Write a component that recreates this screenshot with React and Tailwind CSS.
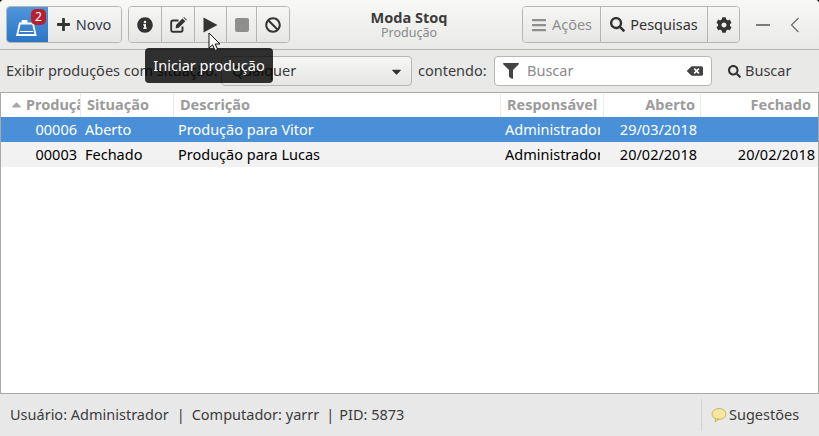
import { FaInfoCircle, FaBan, FaBars, FaSearch, FaCog, FaFilter, FaBackspace, FaPlus, FaCaretDown } from "react-icons/fa";

const btn = "flex h-full items-center justify-center border-r border-[#b6b6b3] last:border-r-0 bg-gradient-to-b from-[#f6f6f5] to-[#e6e6e4]";

function Header({ className, children }) {
  return <div className={`flex h-[24px] items-center border-r border-[#ececec] text-[14.5px] font-bold text-[#9b9b9b] ${className}`}>{children}</div>;
}

function Row({ bg, color, cells }) {
  return (
    <div className={`grid h-[25px] grid-cols-[80px_93px_327px_103px_97px_118px] items-center text-[14.5px] ${bg} ${color}`}>
      <div className="pr-[4px] text-right">{cells[0]}</div>
      <div className="pl-[4px]">{cells[1]}</div>
      <div className="pl-[4px]">{cells[2]}</div>
      <div className="pl-[4px]">
        <div className="w-[95px] overflow-hidden whitespace-nowrap">{cells[3]}</div>
      </div>
      <div className="pr-[4px] text-right">{cells[4]}</div>
      <div className="pr-[4px] text-right">{cells[5]}</div>
    </div>
  );
}

export default function App() {
  return (
    <div className="relative h-[436px] w-[819px] overflow-hidden bg-black font-['Noto_Sans','Open_Sans',sans-serif] text-[14.5px] text-[#3c3c3c]">
      <div className="flex h-full flex-col overflow-hidden rounded-t-[4px] bg-[#e8e8e7]">
        {/* top toolbar */}
        <div className="flex h-[50px] shrink-0 items-center border-b border-[#b4b4b2] bg-gradient-to-b from-[#f8f8f7] to-[#e9e9e7] pl-[6px]">
          <div className="flex h-[37px] w-[116px] overflow-hidden rounded-[4px] border border-[#b6b6b3]">
            <div className="relative flex w-[41px] shrink-0 items-center justify-center bg-gradient-to-b from-[#4f95dc] to-[#2a76c6]">
              <svg width="21" height="18" viewBox="0 0 21 18" className="mr-[2px] mt-[6px]" fill="none" stroke="#fff" strokeWidth="1.8">
                <path d="M1.2 16 3.8 4.5H17l2.6 11.5z" />
                <path d="M4 12.5h13" strokeWidth="1.2" />
                <path d="M6 1.5h5v3H6z" fill="#fff" strokeWidth="1" />
              </svg>
              <span className="absolute right-[2px] top-[2px] flex h-[16px] w-[15px] items-center justify-center rounded-[5px] bg-[#b8202f] text-[12px] text-white">2</span>
            </div>
            <div className="flex flex-1 items-center justify-center gap-[5px] bg-gradient-to-b from-[#f6f6f5] to-[#e6e6e4] pr-[2px] text-[#2f3b4c]">
              <FaPlus className="text-[15px] text-[#333]" />
              <span>Novo</span>
            </div>
          </div>

          <div className="ml-[6px] grid h-[37px] w-[162px] grid-cols-[33px_33px_32px_30px_1fr] overflow-hidden rounded-[4px] border border-[#b6b6b3] text-[#333]">
            <div className={btn}><FaInfoCircle className="text-[16px]" /></div>
            <div className={btn}>
              <svg width="17" height="16" viewBox="0 0 17 16" fill="none" className="ml-[1px]">
                <path d="M12.5 9.5V13a1.8 1.8 0 0 1-1.8 1.8H3A1.8 1.8 0 0 1 1.2 13V5.3A1.8 1.8 0 0 1 3 3.5h5.5" stroke="#333" strokeWidth="1.9" />
                <path d="M6 8 12.5 1.5l2.8 2.8L8.8 10.8 5.6 11.4z" fill="#333" />
                <path d="M13.4.6 14 0l2.8 2.8-.7.7z" fill="#333" />
              </svg>
            </div>
            <div className={btn}>
              <svg width="15" height="16" viewBox="0 0 15 16" fill="#333"><path d="M0.5 0.5 14.5 8 0.5 15.5z" /></svg>
            </div>
            <div className={btn}><div className="h-[14px] w-[14px] rounded-[2px] bg-[#8f8f8f]" /></div>
            <div className={btn}><FaBan className="text-[16px]" /></div>
          </div>

          <div className="flex w-[232px] flex-col items-center pl-[6px] pt-[1px] leading-[15px]">
            <span className="text-[14.5px] font-bold text-[#3c3c3c]">Moda Stoq</span>
            <span className="text-[12.5px] text-[#8a8a8a]">Produção</span>
          </div>

          <div className="flex h-[37px] w-[218px] overflow-hidden rounded-[4px] border border-[#b6b6b3]">
            <div className={`${btn} w-[78px] gap-[5px] text-[#8f8f8f]`}><FaBars className="text-[16px]" /><span>Ações</span></div>
            <div className={`${btn} w-[107px] gap-[5px] text-[#333]`}><FaSearch className="text-[15px]" /><span>Pesquisas</span></div>
            <div className={`${btn} flex-1 text-[#333]`}><FaCog className="text-[16px]" /></div>
          </div>

          <div className="ml-[16px] h-[2px] w-[14px] bg-[#7d7d7d]" />
          <svg width="10" height="16" viewBox="0 0 10 16" className="ml-[20px]" fill="none" stroke="#6b6b6b" strokeWidth="1.2"><path d="M8.5 1 1.5 8l7 7" /></svg>
        </div>

        {/* filter row */}
        <div className="flex h-[42px] shrink-0 items-center bg-[#e9e9e8] pl-[6px]">
          <span className="w-[215px] whitespace-nowrap">Exibir produções com situação:</span>
          <div className="flex h-[30px] w-[191px] items-center justify-between rounded-[4px] border border-[#b6b6b3] bg-gradient-to-b from-[#f6f6f5] to-[#e6e6e4] pl-[10px] pr-[7px]">
            <span>Qualquer</span>
            <FaCaretDown className="text-[15px] text-[#333]" />
          </div>
          <span className="ml-[6px] w-[76px]">contendo:</span>
          <div className="flex h-[30px] w-[218px] items-center rounded-[4px] border border-[#b6b6b3] bg-white pl-[8px] pr-[8px]">
            <FaFilter className="text-[16px] text-[#444]" />
            <span className="ml-[8px] flex-1 text-[#8b8b8b]">Buscar</span>
            <FaBackspace className="text-[16px] text-[#444]" />
          </div>
          <div className="ml-[16px] flex items-center gap-[4px]">
            <FaSearch className="text-[13px] text-[#333]" />
            <span>Buscar</span>
          </div>
        </div>

        {/* table */}
        <div className="flex-1 overflow-hidden border border-[#a9a9a7] bg-white">
          <div className="grid h-[24px] grid-cols-[80px_93px_327px_103px_97px_118px]">
            <Header className="overflow-hidden whitespace-nowrap pl-[8px]">
              <FaCaretDown className="mr-[2px] shrink-0 rotate-180 text-[15px] text-[#a8a8a8]" />
              <span>Produção</span>
            </Header>
            <Header className="pl-[6px]">Situação</Header>
            <Header className="pl-[6px]">Descrição</Header>
            <Header className="pl-[6px]">Responsável</Header>
            <Header className="justify-end pr-[5px]">Aberto</Header>
            <Header className="justify-end border-r-0 pr-[8px]">Fechado</Header>
          </div>
          <Row bg="bg-[#4a90d9]" color="text-white" cells={["00006", "Aberto", "Produção para Vitor", "Administrador", "29/03/2018", ""]} />
          <Row bg="bg-[#f2f2f2]" color="text-black" cells={["00003", "Fechado", "Produção para Lucas", "Administrador", "20/02/2018", "20/02/2018"]} />
        </div>

        {/* status bar */}
        <div className="flex h-[42px] shrink-0 items-center justify-between bg-[#e8e8e8] pl-[10px] text-[#3c3c3c]">
          <div className="flex items-center whitespace-nowrap">
            <span>Usuário: Administrador</span>
            <span className="ml-[8px] mr-[7px]">|</span>
            <span>Computador: yarrr</span>
            <span className="ml-[7px] mr-[5px]">|</span>
            <span>PID: 5873</span>
          </div>
          <div className="flex h-[32px] w-[118px] items-center gap-[2px] border-l border-[#d4d4d4] pl-[9px]">
            <svg width="16" height="16" viewBox="0 0 16 16">
              <ellipse cx="8" cy="7" rx="7" ry="5.5" fill="#f5e6a0" stroke="#c9b860" />
              <path d="M5 12 4 15l4-3z" fill="#f5e6a0" stroke="#c9b860" />
            </svg>
            <span>Sugestões</span>
          </div>
        </div>
      </div>

      {/* tooltip and mouse pointer */}
      <div className="absolute left-[145px] top-[48px] flex h-[35px] w-[128px] items-center justify-center rounded-[4px] bg-black/80 text-white">Iniciar produção</div>
      <svg width="14" height="20" viewBox="0 0 14 20" className="absolute left-[208px] top-[32px]">
        <path d="M1 1v15l3.6-3.2L7 18.5l2.6-1.1-2.4-5.4H12z" fill="#fff" stroke="#111" strokeWidth="1" />
      </svg>
    </div>
  );
}
